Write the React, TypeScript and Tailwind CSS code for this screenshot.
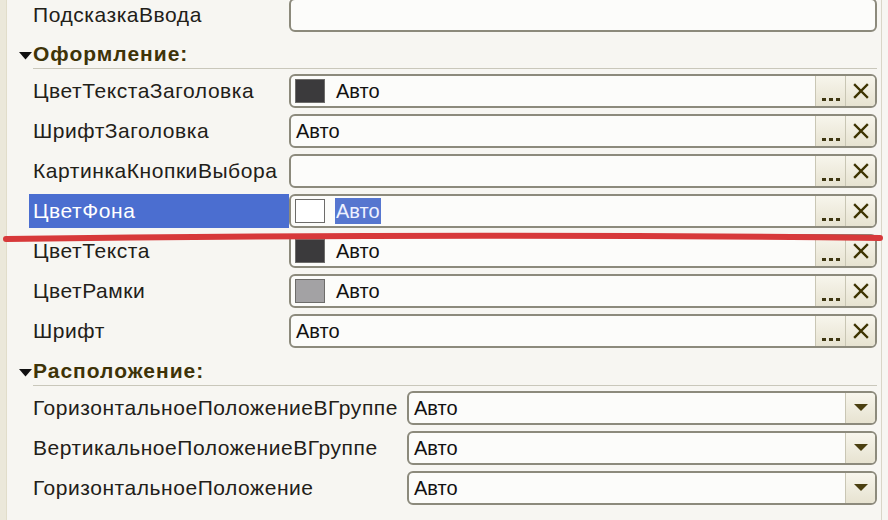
import React from "react";

const FONT = { fontFamily: '"Liberation Sans", Arial, sans-serif' };

type Row = {
  label: string;
  swatch?: string;
  kind: "clear" | "plain" | "select";
  selected?: boolean;
  empty?: boolean;
};

const design: Row[] = [
  { label: "ЦветТекстаЗаголовка", swatch: "#3b3a3c", kind: "clear" },
  { label: "ШрифтЗаголовка", kind: "clear" },
  { label: "КартинкаКнопкиВыбора", kind: "clear", empty: true },
  { label: "ЦветФона", swatch: "#ffffff", kind: "clear", selected: true },
  { label: "ЦветТекста", swatch: "#3b3a3c", kind: "clear" },
  { label: "ЦветРамки", swatch: "#a3a2a4", kind: "clear" },
  { label: "Шрифт", kind: "clear" },
];

const placement: Row[] = [
  { label: "ГоризонтальноеПоложениеВГруппе", kind: "select" },
  { label: "ВертикальноеПоложениеВГруппе", kind: "select" },
  { label: "ГоризонтальноеПоложение", kind: "select" },
];

function SideButton({ children }: { children: React.ReactNode }) {
  return (
    <div className="w-[30px] h-full flex items-center justify-center border-l border-[#c9c6b4] bg-gradient-to-b from-[#f7f5ec] to-[#e7e3d1]">
      {children}
    </div>
  );
}

function Dots() {
  return (
    <div className="flex gap-[3px] mt-[16px]">
      <span className="w-[4px] h-[3px] bg-[#3d3510]" />
      <span className="w-[4px] h-[3px] bg-[#3d3510]" />
      <span className="w-[4px] h-[3px] bg-[#3d3510]" />
    </div>
  );
}

function Cross() {
  return (
    <svg width="16" height="16" viewBox="0 0 16 16">
      <path d="M2 2 L14 14 M14 2 L2 14" stroke="#3d3300" strokeWidth="2.4" strokeLinecap="square" />
    </svg>
  );
}

function Arrow() {
  return (
    <svg width="14" height="8" viewBox="0 0 14 8">
      <path d="M0 0 H14 L7 7 Z" fill="#4a3f10" />
    </svg>
  );
}

function Field({ row }: { row: Row }) {
  return (
    <div className="flex-1 h-[34px] flex items-stretch rounded-[6px] border-2 border-[#8c8a7c] bg-[#fcfcfa] overflow-hidden">
      <div className="flex-1 flex items-center pl-[4px]">
        {row.swatch && (
          <span
            className="w-[30px] h-[24px] border border-[#6d6c6a] mr-[10px]"
            style={{ backgroundColor: row.swatch }}
          />
        )}
        {!row.empty && (
          <span
            className={
              row.selected
                ? "text-[20px] leading-[26px] px-[1px] bg-[#5676cf] text-[#eef2ff]"
                : "text-[20px] leading-[26px] px-[1px] text-[#111]"
            }
          >
            Авто
          </span>
        )}
      </div>
      {row.kind === "clear" && (
        <>
          <SideButton>
            <Dots />
          </SideButton>
          <SideButton>
            <Cross />
          </SideButton>
        </>
      )}
      {row.kind === "select" && (
        <SideButton>
          <Arrow />
        </SideButton>
      )}
    </div>
  );
}

function PropRow({ row, labelWidth }: { row: Row; labelWidth: string }) {
  return (
    <div className="h-[40px] flex items-center">
      <div
        className={`${labelWidth} h-[34px] flex items-center pl-[4px] text-[21px] tracking-[0.55px] whitespace-nowrap ${
          row.selected ? "bg-[#4b6ed0] text-white" : "text-[#222018]"
        }`}
      >
        {row.label}
      </div>
      <Field row={row} />
    </div>
  );
}

function GroupHeader({ title }: { title: string }) {
  return (
    <div className="h-[37px] flex items-stretch">
      <div className="w-[26px] flex items-end justify-end pr-[1px] pb-[11px]">
        <svg width="13" height="8" viewBox="0 0 13 8">
          <path d="M0 0 H13 L6.5 7.5 Z" fill="#111" />
        </svg>
      </div>
      <div className="flex-1 flex items-end pb-[1px] border-b border-[#c9c7bb] mb-[2px] text-[21px] leading-[26px] font-bold text-[#3e3308] tracking-[1px]">
        {title}
      </div>
    </div>
  );
}

export default function App() {
  return (
    <div
      className="relative w-[888px] h-[520px] overflow-hidden flex bg-[#f7f6f2]"
      style={FONT}
    >
      <div className="w-[7px] h-full bg-[#ebe8da] border-r border-[#e1ddca]" />
      <div className="flex-1 flex flex-col pr-[4px] border-r border-[#d9d6c8] mr-[6px]">
        <div className="h-[38px] -mt-[4px] flex items-center">
          <div className="w-[282px] pl-[26px] text-[21px] tracking-[0.55px] text-[#222018]">
            ПодсказкаВвода
          </div>
          <div className="flex-1 h-[34px] rounded-[6px] border-2 border-[#8c8a7c] bg-[#fcfcfa]" />
        </div>
        <GroupHeader title="Оформление:" />
        <div className="pl-[22px]">
          {design.map((r) => (
            <PropRow key={r.label} row={r} labelWidth="w-[260px]" />
          ))}
        </div>
        <GroupHeader title="Расположение:" />
        <div className="pl-[22px]">
          {placement.map((r) => (
            <PropRow key={r.label} row={r} labelWidth="w-[378px]" />
          ))}
        </div>
      </div>
      <svg
        className="absolute left-0 top-0 pointer-events-none"
        width="888"
        height="520"
        viewBox="0 0 888 520"
      >
        <path
          d="M6 239 Q 440 233 880 238"
          stroke="#d7393a"
          strokeWidth="6"
          strokeLinecap="round"
          fill="none"
        />
      </svg>
    </div>
  );
}
